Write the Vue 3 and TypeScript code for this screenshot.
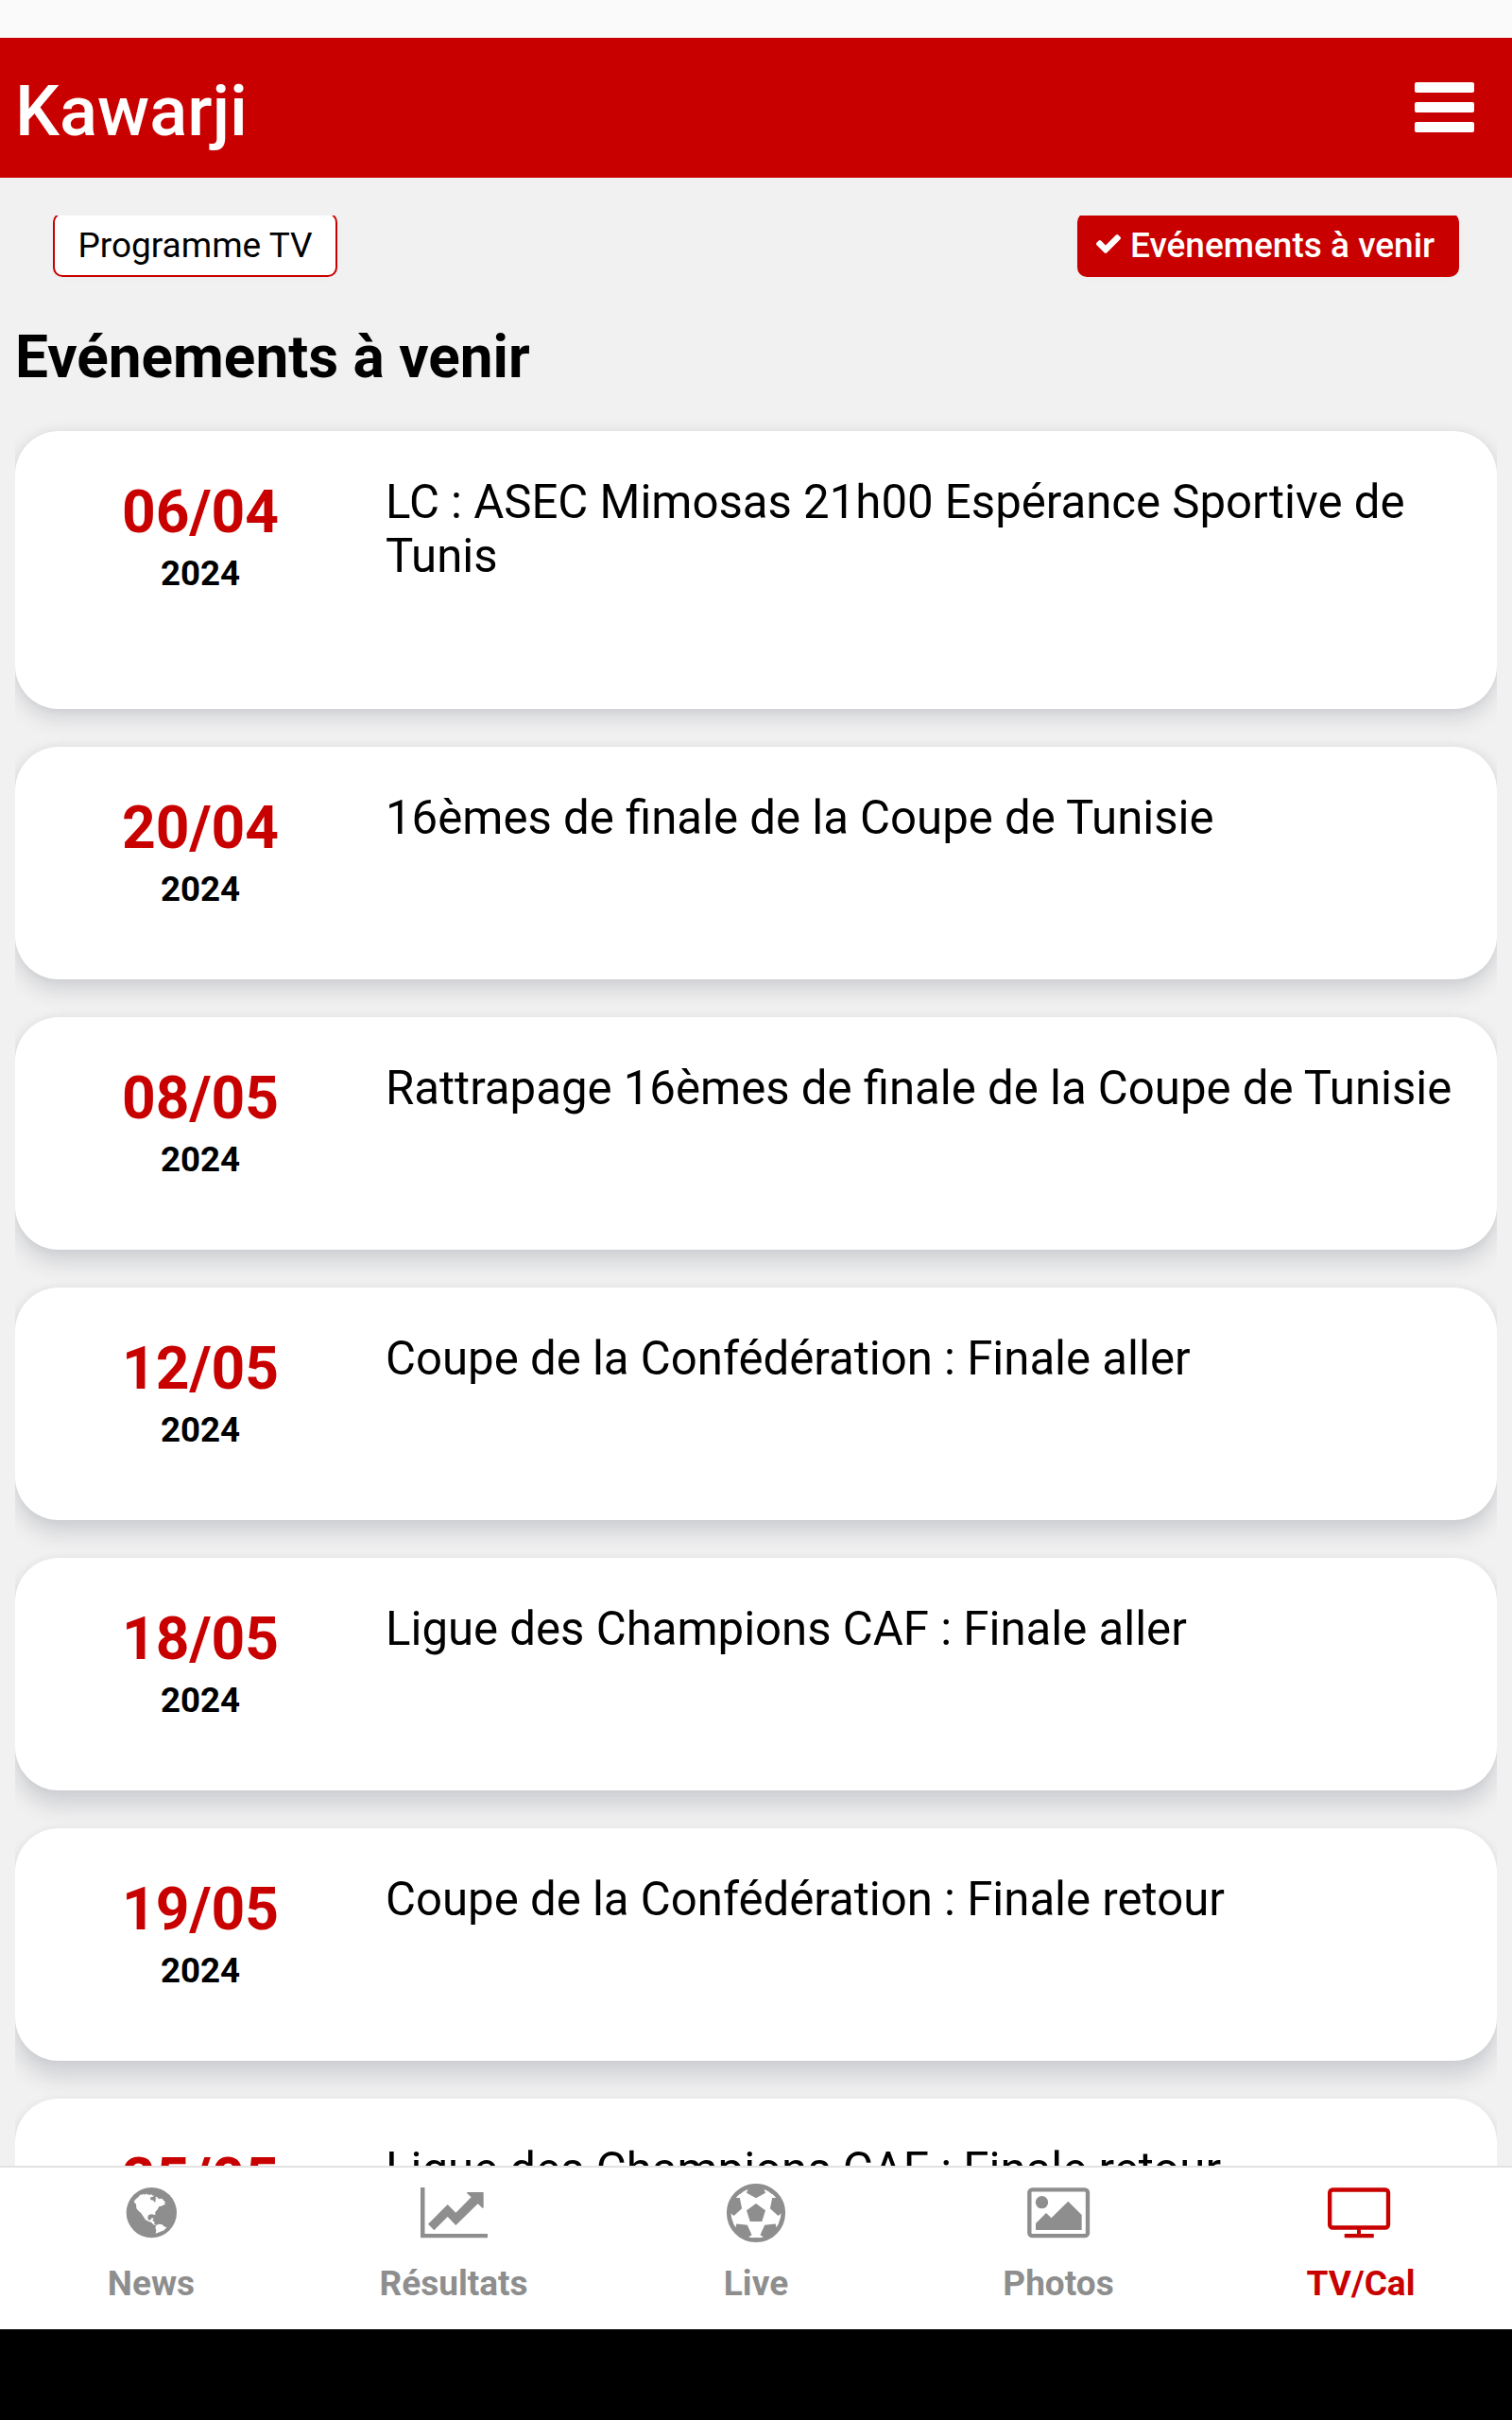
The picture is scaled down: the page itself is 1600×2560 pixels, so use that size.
<script setup lang="ts">
import { ref } from 'vue'

interface EventItem {
  date: string
  year: string
  title: string
}

const events: EventItem[] = [
  { date: '06/04', year: '2024', title: 'LC : ASEC Mimosas 21h00 Espérance Sportive de Tunis' },
  { date: '20/04', year: '2024', title: '16èmes de finale de la Coupe de Tunisie' },
  { date: '08/05', year: '2024', title: 'Rattrapage 16èmes de finale de la Coupe de Tunisie' },
  { date: '12/05', year: '2024', title: 'Coupe de la Confédération : Finale aller' },
  { date: '18/05', year: '2024', title: 'Ligue des Champions CAF : Finale aller' },
  { date: '19/05', year: '2024', title: 'Coupe de la Confédération : Finale retour' },
  { date: '25/05', year: '2024', title: 'Ligue des Champions CAF : Finale retour' },
]

const tabs = ['News', 'Résultats', 'Live', 'Photos', 'TV/Cal']
const active = ref('TV/Cal')

// The elevation shadow grows as a card sits lower on the screen.
const shadow = (i: number) =>
  `0 0 10px rgba(0, 0, 0, 0.05), 0 ${(9 + i * 1.6).toFixed(1)}px 22px rgba(40, 50, 72, 0.165)`
</script>

<template>
  <div class="app">
    <div class="status"></div>
    <header class="header">
      <h1>Kawarji</h1>
      <button class="menu" aria-label="Menu">
        <span></span><span></span><span></span>
      </button>
    </header>

    <main class="content">
      <div class="chips">
        <button class="chip">Programme TV</button>
        <button class="chip selected">
          <svg class="check" viewBox="121 334 1550 1188">
            <path
              d="M1671 566q0 40-28 68l-724 724-136 136q-28 28-68 28t-68-28l-136-136-362-362q-28-28-28-68t28-68l136-136q28-28 68-28t68 28l294 295 656-657q28-28 68-28t68 28l136 136q28 28 28 68z"
            />
          </svg>
          Evénements à venir
        </button>
      </div>

      <h2>Evénements à venir</h2>

      <div class="list">
        <article v-for="(e, i) in events" :key="e.date" class="card" :style="{ boxShadow: shadow(i) }">
          <div class="when">
            <div class="date">{{ e.date }}</div>
            <div class="year">{{ e.year }}</div>
          </div>
          <div class="title">{{ e.title }}</div>
        </article>
      </div>
    </main>

    <nav class="nav">
      <a v-for="t in tabs" :key="t" class="tab" :class="{ on: t === active }" @click="active = t">
        <svg class="icon" viewBox="0 9 300 270">
          <template v-if="t === 'News'">
            <circle cx="151" cy="152" r="80" />
            <path
              class="cut"
              d="M95 118L99 111L107 104L117 94L121 96L125 92L131 95L135 91L138 95L143 94L145 97L151 93L153 98L158 96L157 101L149 103L146 108L150 112L157 113L161 119L164 117L163 110L166 107L162 102L169 103L175 109L180 107L186 109L190 114L196 119L190 121L196 125L186 129L183 131L175 132L171 140L163 150L163 160L159 158L151 157L142 159L139 166L140 173L144 176L149 174L151 169L158 170L154 178L160 180L160 189L166 191L163 193L156 189L151 183L144 181L132 175L127 167L118 154L108 145L103 138L102 125Z"
            />
            <path class="cut" d="M166 192L174 188L185 190L190 195L199 199L191 208L178 213L164 218L166 208L163 200Z" />
          </template>
          <template v-else-if="t === 'Résultats'">
            <path d="M45 72H58.5V219H258V232H45Z" />
            <path
              d="M69 188L131 126L157 152L206 103L192 90Q192 87 195 87H243Q245 87 245 89V135Q245 138 241 137L227 124L157 192L131 165L88 208Z"
            />
          </template>
          <template v-else-if="t === 'Live'">
            <circle cx="150" cy="153" r="86.7" class="ring" />
            <path d="M150 123L180 145L169 180H131L120 145Z" />
            <path
              v-for="a in [0, 72, 144, 216, 288]"
              :key="a"
              :transform="`rotate(${a} 150 153)`"
              d="M124.5 77Q112 82 100 92L92 89L120 66L150 60L180 66L208 89L200 92Q188 82 175.500 77L180 89L150 106L120 89Z"
            />
          </template>
          <template v-else-if="t === 'Photos'">
            <rect x="58" y="79" width="185" height="146.500" rx="9" class="line" />
            <circle cx="97.500" cy="119" r="20" />
            <path d="M78 186L111 153L127.500 169L181 116L224 159V207H78Z" />
          </template>
          <template v-else>
            <rect x="51.500" y="79.500" width="185.500" height="120" rx="9" class="line" />
            <path d="M138 204H150V219H189Q191.500 219 191.500 222V229Q191.500 232 189 232H100Q98 232 98 229V222Q98 219 100 219H138Z" />
          </template>
        </svg>
        <span class="label">{{ t }}</span>
      </a>
    </nav>
    <div class="system-bar"></div>
  </div>
</template>

<style>
body {
  margin: 0;
}
</style>

<style scoped>
.app {
  --red: #c80000;
  width: 1600px;
  height: 2560px;
  display: flex;
  flex-direction: column;
  overflow: hidden;
  background: #f1f1f1;
  color: #000;
  font-family: Roboto, sans-serif;
}
h1,
h2 {
  margin: 0;
}
button {
  font: inherit;
  border: 0;
  margin: 0;
}
.status {
  flex: none;
  height: 40px;
  background: #fafafa;
}
.header {
  flex: none;
  box-sizing: border-box;
  height: 148px;
  padding: 0 40px 0 16px;
  display: flex;
  align-items: center;
  justify-content: space-between;
  background: var(--red);
}
.header h1 {
  padding-top: 7px;
  font-size: 74.3px;
  line-height: 88px;
  font-weight: 500;
  color: #fff;
}
.menu {
  width: 63px;
  padding: 0;
  margin-bottom: 1px;
  display: flex;
  flex-direction: column;
  gap: 10.3px;
  background: none;
}
.menu span {
  height: 10.7px;
  border-radius: 2px;
  background: #fff;
}
.content {
  flex: 1;
  min-height: 0;
  overflow: hidden;
  padding-top: 40px;
}
.chips {
  height: 82px;
  padding: 0 56px;
  display: flex;
  justify-content: space-between;
  align-items: flex-start;
  overflow: hidden;
}
.chip {
  box-sizing: border-box;
  width: 301px;
  height: 68px;
  margin-top: -3px;
  display: flex;
  align-items: center;
  justify-content: center;
  border: 2px solid var(--red);
  border-radius: 10px;
  background: #fff;
  color: #000;
  font-size: 37px;
  line-height: 44px;
  padding: 1px 0 0;
  white-space: nowrap;
  box-shadow: 0 2px 8px rgba(0, 0, 0, 0.02);
}
.chip.selected {
  width: 404px;
  justify-content: flex-start;
  padding-left: 18px;
  background: var(--red);
  color: #fff;
  font-weight: 500;
}
.check {
  width: 26px;
  height: 20px;
  margin: 0 10px 4px 0;
  fill: #fff;
}
h2 {
  padding: 31px 16px 42px;
  font-size: 62.1px;
  line-height: 73px;
  font-weight: 700;
}
.list {
  height: 1900px;
  margin: -60px 16px 0;
  padding-top: 60px;
  display: flex;
  flex-direction: column;
  gap: 40px;
  overflow: hidden;
}
.card {
  flex: none;
  box-sizing: border-box;
  min-height: 246px;
  display: flex;
  border-radius: 46px;
  background: #fff;
}
.card:first-child {
  min-height: 294px;
}
.when {
  flex: none;
  width: 392px;
  padding-top: 50px;
  text-align: center;
  font-weight: 700;
}
.date {
  font-size: 62.3px;
  line-height: 72px;
  color: var(--red);
}
.year {
  padding-top: 7px;
  font-size: 36.7px;
  line-height: 43px;
}
.title {
  flex: 1;
  padding-top: 47px;
  font-size: 49.15px;
  line-height: 57px;
}
.nav {
  flex: none;
  box-sizing: border-box;
  height: 173px;
  display: flex;
  border-top: 2px solid #e2e2e2;
  background: #fff;
}
.tab {
  flex: 1;
  display: flex;
  flex-direction: column;
  align-items: center;
  color: #8e8e8e;
}
.tab.on {
  color: var(--red);
}
.icon {
  width: 100px;
  height: 90px;
  fill: currentColor;
}
.icon .cut {
  fill: #fff;
}
.icon .ring,
.icon .line {
  fill: none;
  stroke: currentColor;
  stroke-width: 13;
}
.label {
  margin-top: 11px;
  font-size: 37px;
  line-height: 44px;
  font-weight: 700;
}
.system-bar {
  flex: none;
  height: 96px;
  background: #000;
}
</style>
